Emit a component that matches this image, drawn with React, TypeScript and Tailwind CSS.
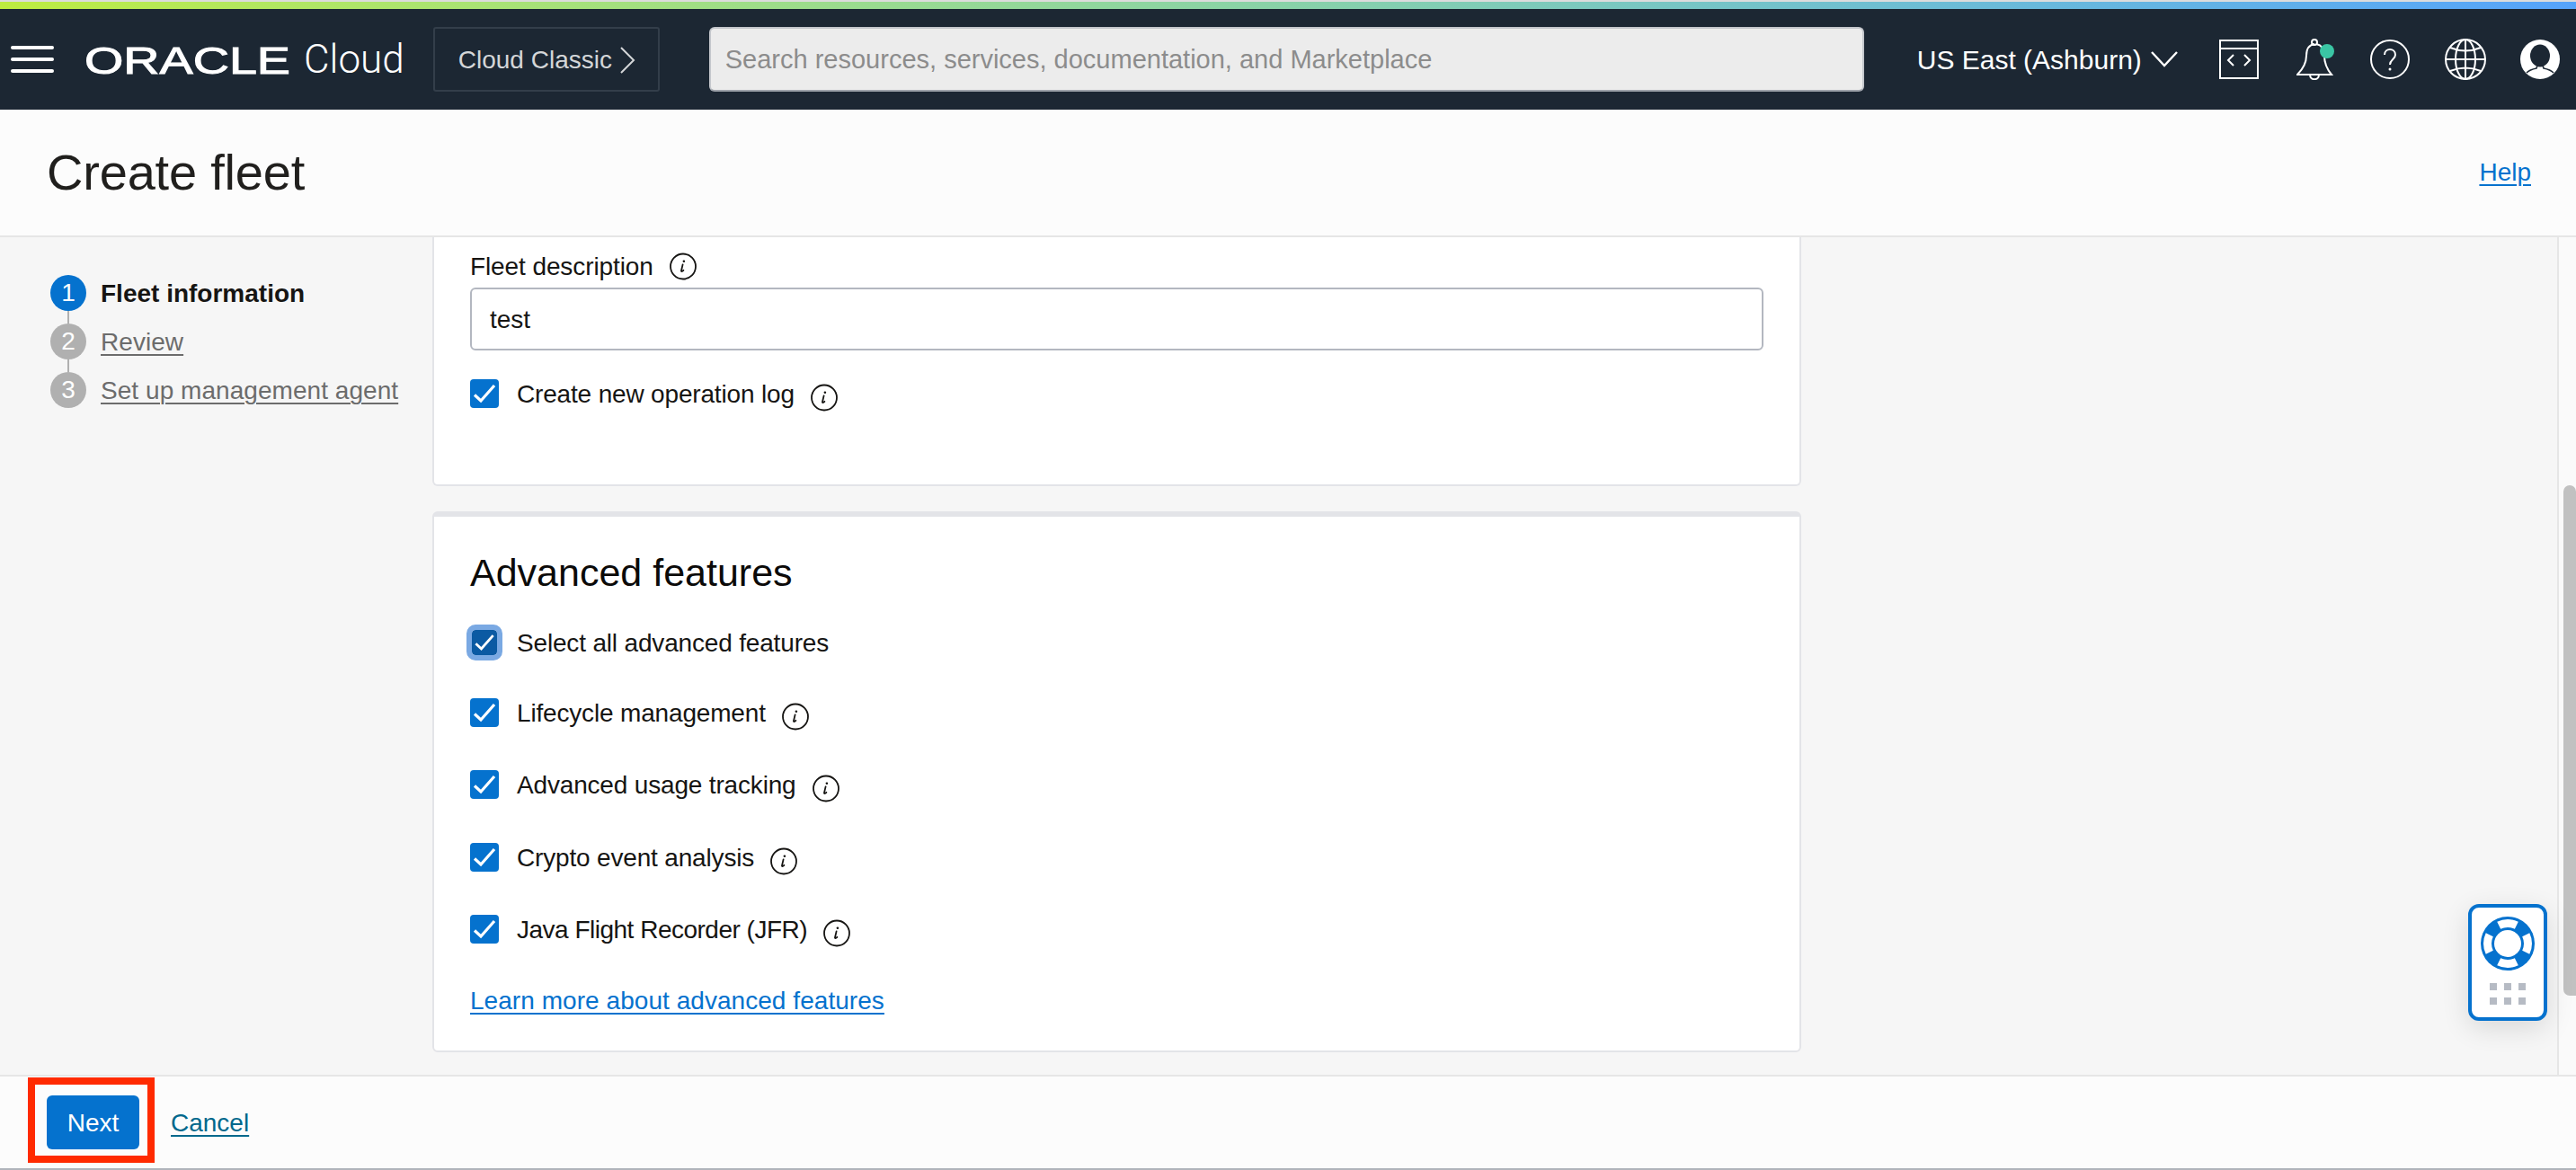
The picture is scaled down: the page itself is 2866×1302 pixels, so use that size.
const sans = "font-['Liberation_Sans',Arial,sans-serif]";

function InfoIcon() {
  return (
    <svg viewBox="0 0 30 31" className="h-[31px] w-[30px] shrink-0 translate-y-1 text-[#161513]" fill="none" stroke="currentColor">
      <circle cx="15" cy="15.5" r="14" strokeWidth="1.8" />
      <path d="M14.6 13.4 13 20.2c-.2 1 .7 1.3 2.4-.4" strokeWidth="1.8" strokeLinecap="round" />
      <circle cx="15.9" cy="9.8" r="1.3" fill="currentColor" stroke="none" />
    </svg>
  );
}

function Check() {
  return (
    <svg viewBox="0 0 32 32" className="h-full w-full" fill="none" stroke="white" strokeWidth="3.2">
      <path d="M5 17.5 12 24 27 7" />
    </svg>
  );
}

function CheckRow({ label, className = "", tight }: { label: string; className?: string; tight?: boolean }) {
  return (
    <div className={`flex h-8 items-center ${className}`}>
      <div className="h-8 w-8 shrink-0 rounded-[4px] bg-[#0572ce]">
        <Check />
      </div>
      <span className={`ml-5 pt-0.5 text-[28px] leading-8 text-[#161513] ${tight ? "tracking-[-0.5px]" : "tracking-[-0.17px]"}`}>{label}</span>
      <span className="ml-[18px]">
        <InfoIcon />
      </span>
    </div>
  );
}

function Step({ n, label, active, last }: { n: number; label: string; active?: boolean; last?: boolean }) {
  return (
    <div className="relative flex h-[54px] items-start">
      {!last && <div className="absolute left-[19px] top-10 h-[14px] w-0.5 bg-[#b0b0b0]" />}
      <div className={`flex h-10 w-10 shrink-0 items-center justify-center rounded-full text-[28px] text-white ${active ? "bg-[#0572ce]" : "bg-[#b0b0b0]"}`}>
        {n}
      </div>
      {active ? (
        <span className="ml-4 pt-px text-[28px] leading-10 font-bold text-[#161513]">{label}</span>
      ) : (
        <a className="ml-4 pt-px text-[28px] leading-10 tracking-[0.05px] text-[#6c6c6c] underline decoration-2 underline-offset-4">{label}</a>
      )}
    </div>
  );
}

function Header() {
  return (
    <header className="flex h-[112px] shrink-0 items-center bg-[#1c2733] text-white">
      <div className="ml-3 flex w-12 flex-col gap-[9px]">
        <div className="h-1 rounded-sm bg-white" />
        <div className="h-1 rounded-sm bg-white" />
        <div className="h-1 rounded-sm bg-white" />
      </div>
      {/* logo: real text stretched to the wordmark's box */}
      <svg width="230" height="50" className="ml-[34px]" viewBox="0 0 230 50">
        <text x="0" y="40.5" textLength="229" lengthAdjust="spacingAndGlyphs" fontFamily="Liberation Sans" fontWeight="400" fontSize="42" fill="white" stroke="white" strokeWidth="1">
          ORACLE
        </text>
      </svg>
      <span className="ml-[14px] font-['Roboto',sans-serif] text-[44px] leading-none font-light">Cloud</span>
      <div className="ml-[32px] flex h-[72px] w-[252px] items-center rounded-[3px] border-2 border-[#333e4a] pl-[26px] pt-px text-[28px] text-[#d4d6d8]">
        Cloud Classic
        <svg viewBox="0 0 18 30" className="ml-2 h-[30px] w-[18px]" fill="none" stroke="currentColor" strokeWidth="2">
          <path d="M2 1 16 15 2 29" />
        </svg>
      </div>
      <div className="ml-[55px] flex h-[72px] w-[1285px] items-center rounded-md border-2 border-[#c4c7cc] border-b-[#9ea3aa] bg-[#ececec] pl-4 pt-0.5 text-[29px] text-[#8c8c8c]">
        Search resources, services, documentation, and Marketplace
      </div>
      <span className="ml-[59px] text-[30px]">US East (Ashburn)</span>
      <svg viewBox="0 0 30 18" className="ml-[10px] h-[18px] w-[30px]" fill="none" stroke="white" strokeWidth="2.4">
        <path d="M1 1 15 16 29 1" />
      </svg>
      <svg viewBox="0 0 44 44" className="ml-[46px] h-[44px] w-[44px]" fill="none" stroke="white" strokeWidth="2">
        <rect x="1" y="1" width="42" height="42" />
        <path d="M1 10h42M16 17l-6 6 6 6M28 17l6 6-6 6" />
      </svg>
      <div className="relative ml-[42px] h-[46px] w-[42px]">
        <svg viewBox="0 0 42 46" className="h-full w-full" fill="none" stroke="white" strokeWidth="2">
          <path d="M20 6c-7 1-9 6-9 13 0 9-4 15-10 21h38c-5-6-8-12-8-21 0-7-3-12-9-13" />
          <circle cx="20" cy="4" r="3" />
          <path d="M15 40c0 7 10 7 10 0" />
        </svg>
        <div className="absolute right-0 top-[6px] h-4 w-4 rounded-full bg-[#3ac5a4]" />
      </div>
      <svg viewBox="0 0 44 44" className="ml-[40px] h-[44px] w-[44px]" fill="none" stroke="white" strokeWidth="2">
        <circle cx="22" cy="22" r="21" />
        <path d="M16 17c0-8 12-8 12 0 0 5-6 5-6 11" />
        <circle cx="22" cy="33" r="1.5" fill="white" stroke="none" />
      </svg>
      <svg viewBox="0 0 46 46" className="ml-[39px] h-[46px] w-[46px]" fill="none" stroke="white" strokeWidth="2">
        <circle cx="23" cy="23" r="22" />
        <ellipse cx="23" cy="23" rx="11" ry="22" />
        <path d="M23 1v44M1 23h44M6 10q17 7 34 0M6 36q17-7 34 0" />
      </svg>
      <svg viewBox="0 0 44 44" className="ml-[38px] h-[44px] w-[44px]">
        <circle cx="22" cy="22" r="22" fill="white" />
        <ellipse cx="22" cy="18" rx="11" ry="12.5" fill="#1c2733" />
        <path d="M7 37c3-3 6-4 11-5l1-3h6l1 3c5 1 8 2 11 5" fill="none" stroke="#1c2733" strokeWidth="1.6" />
      </svg>
    </header>
  );
}

export default function App() {
  return (
    <div className={`relative flex h-[1302px] w-[2866px] flex-col overflow-hidden bg-[#f6f6f6] ${sans}`}>
      <div className="h-0.5 shrink-0 bg-[#dcdcdc]" />
      <div className="h-2 shrink-0 bg-gradient-to-r from-[#bdec3f] via-[#88d2a8] to-[#56a3fb]" />
      <Header />

      <div className="flex h-[142px] shrink-0 items-center justify-between border-b-2 border-[#e6e6e6] bg-[#fcfcfc] pl-[52px] pr-[50px]">
        <h1 className="text-[56px] leading-none font-normal tracking-[-0.2px] text-[#201f1d]">Create fleet</h1>
        <a className="text-[28px] text-[#0572ce] underline decoration-2 underline-offset-4">Help</a>
      </div>

      <div className="flex min-h-0 flex-1">
        <nav className="w-[481px] shrink-0 pl-14 pt-[42px]">
          <Step n={1} label="Fleet information" active />
          <Step n={2} label="Review" />
          <Step n={3} label="Set up management agent" last />
        </nav>

        <main className="flex w-[1523px] shrink-0 flex-col">
          <section className="h-[277px] shrink-0 rounded-b-md border-x-2 border-b-2 border-[#e3e4e8] bg-white px-10 pt-[14px]">
            <div className="flex h-9 items-center pt-0.5 text-[28px] tracking-[-0.1px] text-[#161513]">
              Fleet description
              <span className="ml-[18px]">
                <svg viewBox="0 0 30 31" className="h-[31px] w-[30px] -translate-y-px" fill="none" stroke="currentColor">
                  <circle cx="15" cy="15.5" r="14" strokeWidth="1.8" />
                  <path d="M14.6 13.4 13 20.2c-.2 1 .7 1.3 2.4-.4" strokeWidth="1.8" strokeLinecap="round" />
                  <circle cx="15.9" cy="9.8" r="1.3" fill="currentColor" stroke="none" />
                </svg>
              </span>
            </div>
            <div className="mt-1.5 flex h-[70px] items-center rounded-md border-2 border-[#b3b7c0] pl-5 pt-0.5 text-[28px] text-[#161513]">test</div>
            <CheckRow label="Create new operation log" className="mt-8" />
          </section>

          <section className="mt-[28px] h-[602px] shrink-0 rounded-md border-x-2 border-t-[6px] border-b-2 border-[#e3e4e8] bg-white px-10 pt-[36px]">
            <h2 className="h-[52px] text-[43px] leading-[52px] font-normal text-[#0b0a09]">Advanced features</h2>
            <div className="mt-[36px] flex h-8 items-center">
              <div className="ml-0.5 h-7 w-7 shrink-0 rounded-[4px] bg-[#0b5aa3] outline-[6px] outline-[#7aa9e3]">
                <Check />
              </div>
              <span className="ml-[22px] pt-0.5 text-[28px] leading-8 tracking-[-0.17px] text-[#161513]">Select all advanced features</span>
            </div>
            <CheckRow label="Lifecycle management" className="mt-[46px]" />
            <CheckRow label="Advanced usage tracking" className="mt-12" />
            <CheckRow label="Crypto event analysis" className="mt-[49px]" />
            <CheckRow label="Java Flight Recorder (JFR)" className="mt-12" tight />
            <a className="mt-[46px] block pt-0.5 text-[28px] leading-8 tracking-[0.05px] text-[#0572ce] underline decoration-2 underline-offset-4">Learn more about advanced features</a>
          </section>
        </main>

        <div className="flex-1" />
        <div className="relative w-[21px] shrink-0 border-l-2 border-[#e6e6e6] bg-[#fafafa]">
          <div className="absolute right-0 top-[276px] h-[568px] w-[14px] rounded-t-lg rounded-bl-lg bg-[#c1c1c1]" />
        </div>
      </div>

      <footer className="flex h-[104px] shrink-0 items-center border-t-2 border-[#e6e6e6] bg-[#fcfcfc] pl-[52px]">
        <button className="h-[60px] w-[103px] rounded-md bg-[#0572ce] pt-px text-[28px] text-white">Next</button>
        <a className="ml-[35px] pt-0.5 text-[28px] text-[#00688c] underline decoration-2 underline-offset-4">Cancel</a>
      </footer>
      <div className="h-0.5 shrink-0 bg-[#b0b4bb]" />

      {/* red annotation round the Next button */}
      <div className="absolute left-[31px] top-[1199px] h-[95px] w-[141px] border-8 border-[#ff2a00]" />

      {/* floating help widget */}
      <div className="absolute left-[2746px] top-[1006px] flex h-[130px] w-[88px] flex-col items-center rounded-xl border-4 border-[#0572ce] bg-white pt-[10px] shadow-[0_8px_30px_rgba(0,0,0,0.12)]">
        <svg viewBox="0 0 60 60" className="h-[60px] w-[60px]">
          <circle cx="30" cy="30" r="30" fill="#0572ce" />
          <circle cx="30" cy="30" r="22.5" fill="none" stroke="white" strokeWidth="9" pathLength={360} strokeDasharray="52 38" strokeDashoffset="26" />
          <circle cx="30" cy="30" r="15" fill="white" />
        </svg>
        <div className="mt-[14px] grid grid-cols-3 gap-2">
          {[0, 1, 2, 3, 4, 5].map((i) => (
            <div key={i} className="h-2 w-2 bg-[#b6bbc4]" />
          ))}
        </div>
      </div>
    </div>
  );
}
